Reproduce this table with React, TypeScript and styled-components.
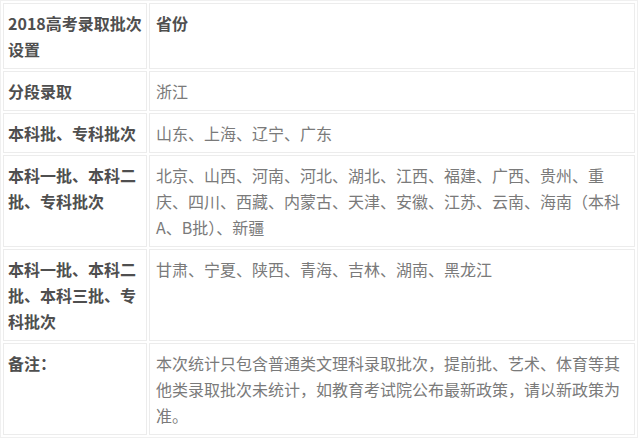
import React from 'react'
import styled, { createGlobalStyle } from 'styled-components'

const GlobalStyle = createGlobalStyle`
  html, body {
    margin: 0;
    padding: 0;
    background: #ffffff;
  }
`

type Row = {
  label: string[]
  value: string[]
  head?: boolean
}

const rows: Row[] = [
  { label: ['2018高考录取批次', '设置'], value: ['省份'], head: true },
  { label: ['分段录取'], value: ['浙江'] },
  { label: ['本科批、专科批次'], value: ['山东、上海、辽宁、广东'] },
  {
    label: ['本科一批、本科二', '批、专科批次'],
    value: [
      '北京、山西、河南、河北、湖北、江西、福建、广西、贵州、重',
      '庆、四川、西藏、内蒙古、天津、安徽、江苏、云南、海南（本科',
      'A、B批）、新疆',
    ],
  },
  {
    label: ['本科一批、本科二', '批、本科三批、专', '科批次'],
    value: ['甘肃、宁夏、陕西、青海、吉林、湖南、黑龙江'],
  },
  {
    label: ['备注：'],
    value: [
      '本次统计只包含普通类文理科录取批次，提前批、艺术、体育等其',
      '他类录取批次未统计，如教育考试院公布最新政策，请以新政策为',
      '准。',
    ],
  },
]

const Table = styled.table`
  width: 638px;
  border-collapse: separate;
  border-spacing: 2px;
  border: 1px solid #f0f0f0;
  font-family: "Noto Sans CJK SC", "Noto Sans", sans-serif;
  font-size: 16px;
  line-height: 26px;
`

const Cell = styled.td<{ $label?: boolean; $head?: boolean }>`
  vertical-align: top;
  border: 1px solid #ececec;
  padding: 6px ${p => (p.$label ? '4px' : '6px')};
  width: ${p => (p.$label ? '134px' : 'auto')};
  color: ${p => (p.$label || p.$head ? '#4f4f4f' : '#7a7a7a')};
  font-weight: ${p => (p.$label || p.$head ? 700 : 400)};
`

const Line = styled.span`
  display: block;
  white-space: nowrap;
`

const App = () => {
  return (
    <>
      <GlobalStyle />
      <Table>
        <tbody>
          {rows.map((row, i) => (
            <tr key={i}>
              <Cell $label>
                {row.label.map((l, j) => <Line key={j}>{l}</Line>)}
              </Cell>
              <Cell $head={row.head}>
                {row.value.map((v, j) => <Line key={j}>{v}</Line>)}
              </Cell>
            </tr>
          ))}
        </tbody>
      </Table>
    </>
  )
}

export default App
